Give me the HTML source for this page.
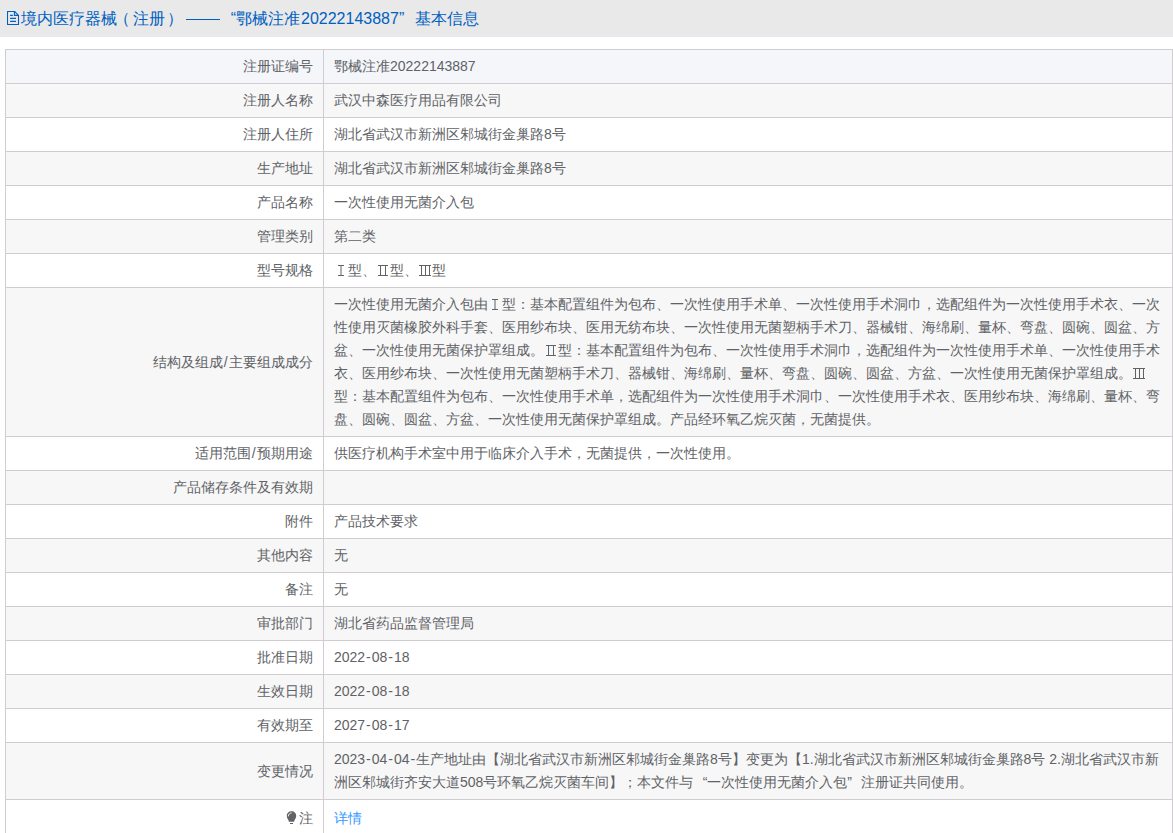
<!DOCTYPE html>
<html>
<head>
<meta charset="utf-8">
<style>
html,body{margin:0;padding:0;background:#fff;}
body{width:1173px;height:833px;overflow:hidden;position:relative;font-family:"Liberation Sans",sans-serif;}
.hd{position:absolute;left:0;top:0;width:1173px;height:36px;background:#e9e9e9;border-bottom:1px solid #e7eaf4;}
.t{position:absolute;top:1px;height:36px;line-height:36px;font-size:16px;color:#0060c0;white-space:nowrap;}
.ico{position:absolute;left:7px;top:11px;}
.dash{position:absolute;left:186px;top:19px;width:34px;height:1px;background:#0060c0;}
table{position:absolute;left:5px;top:49px;width:1168px;border-collapse:collapse;table-layout:fixed;}
td{border:1px solid #cfcdcf;padding:5px 10px;line-height:23px;font-size:14px;color:#606266;vertical-align:middle;white-space:nowrap;overflow:hidden;}
td.l{width:297px;text-align:right;}
tr.g td{background:#f7f7f7;}
tr.b td{background:#f4f6fa;}
.ln{display:block;white-space:nowrap;}
.rn{display:inline-block;vertical-align:top;}
.hy{display:inline-block;width:6.6px;text-align:center;}
.sl{display:inline-block;width:6.4px;text-align:center;}
.ql,.qr{display:inline-block;width:14px;}
.ql{text-align:right;}
.bulb{display:inline-block;vertical-align:top;margin-top:4px;margin-right:2px;}
tr.last td{padding-top:7px;padding-bottom:3px;}
a{color:#3399ff;text-decoration:none;}
</style>
</head>
<body>
<div class="hd">
  <svg class="ico" width="14" height="16" viewBox="0 0 14 16"><path d="M0.5 0.5H7.6L11.5 4.4V13.5H0.5Z" fill="none" stroke="#0060c0" stroke-width="1.1" stroke-linejoin="round"/><path d="M7.4 0.5V4.4H11.5" fill="none" stroke="#0060c0" stroke-width="1.1"/><path d="M3.1 4.4H5.9M3.1 7.4H9M3.1 10.4H9" stroke="#0060c0" stroke-width="1.1"/></svg>
  <span class="t" style="left:21px">境内医疗器械</span><span class="t" style="left:114px;width:16px;text-align:right">（</span><span class="t" style="left:133px">注册</span><span class="t" style="left:167px;width:16px;text-align:left">）</span><span class="dash"></span><span class="t" style="left:220px;width:16px;text-align:right">“</span><span class="t" style="left:236px">鄂械注准</span><span class="t" style="left:301px">20222143887</span><span class="t" style="left:399px;width:16px;text-align:left">”</span><span class="t" style="left:415px">基本信息</span>
</div>
<table>
<tr class="b"><td class="l">注册证编号</td><td>鄂械注准20222143887</td></tr>
<tr class="g"><td class="l">注册人名称</td><td>武汉中森医疗用品有限公司</td></tr>
<tr><td class="l">注册人住所</td><td>湖北省武汉市新洲区邾城街金巢路8号</td></tr>
<tr class="g"><td class="l">生产地址</td><td>湖北省武汉市新洲区邾城街金巢路8号</td></tr>
<tr><td class="l">产品名称</td><td>一次性使用无菌介入包</td></tr>
<tr class="g"><td class="l">管理类别</td><td>第二类</td></tr>
<tr><td class="l">型号规格</td><td><svg class="rn" width="14" height="23" viewBox="0 0 14 23"><path d="M4 6.5H10M7 6.5V16.5M4 16.5H10" stroke="#606266" stroke-width="1" fill="none"/></svg>型、<svg class="rn" width="14" height="23" viewBox="0 0 14 23"><path d="M2 6.5H12M4.5 6.5V16.5M9.5 6.5V16.5M2 16.5H12" stroke="#606266" stroke-width="1" fill="none"/></svg>型、<svg class="rn" width="14" height="23" viewBox="0 0 14 23"><path d="M1 6.5H13M3.5 6.5V16.5M7.5 6.5V16.5M11.5 6.5V16.5M1 16.5H13" stroke="#606266" stroke-width="1" fill="none"/></svg>型</td></tr>
<tr class="g"><td class="l">结构及组成<span class="sl">/</span>主要组成成分</td><td>
<span class="ln">一次性使用无菌介入包由<svg class="rn" width="14" height="23" viewBox="0 0 14 23"><path d="M4 6.5H10M7 6.5V16.5M4 16.5H10" stroke="#606266" stroke-width="1" fill="none"/></svg>型：基本配置组件为包布、一次性使用手术单、一次性使用手术洞巾，选配组件为一次性使用手术衣、一次</span>
<span class="ln">性使用灭菌橡胶外科手套、医用纱布块、医用无纺布块、一次性使用无菌塑柄手术刀、器械钳、海绵刷、量杯、弯盘、圆碗、圆盆、方</span>
<span class="ln">盆、一次性使用无菌保护罩组成。<svg class="rn" width="14" height="23" viewBox="0 0 14 23"><path d="M2 6.5H12M4.5 6.5V16.5M9.5 6.5V16.5M2 16.5H12" stroke="#606266" stroke-width="1" fill="none"/></svg>型：基本配置组件为包布、一次性使用手术洞巾，选配组件为一次性使用手术单、一次性使用手术</span>
<span class="ln">衣、医用纱布块、一次性使用无菌塑柄手术刀、器械钳、海绵刷、量杯、弯盘、圆碗、圆盆、方盆、一次性使用无菌保护罩组成。<svg class="rn" width="14" height="23" viewBox="0 0 14 23"><path d="M1 6.5H13M3.5 6.5V16.5M7.5 6.5V16.5M11.5 6.5V16.5M1 16.5H13" stroke="#606266" stroke-width="1" fill="none"/></svg></span>
<span class="ln">型：基本配置组件为包布、一次性使用手术单，选配组件为一次性使用手术洞巾、一次性使用手术衣、医用纱布块、海绵刷、量杯、弯</span>
<span class="ln">盘、圆碗、圆盆、方盆、一次性使用无菌保护罩组成。产品经环氧乙烷灭菌，无菌提供。</span>
</td></tr>
<tr><td class="l">适用范围<span class="sl">/</span>预期用途</td><td>供医疗机构手术室中用于临床介入手术，无菌提供，一次性使用。</td></tr>
<tr class="g"><td class="l">产品储存条件及有效期</td><td></td></tr>
<tr><td class="l">附件</td><td>产品技术要求</td></tr>
<tr class="g"><td class="l">其他内容</td><td>无</td></tr>
<tr><td class="l">备注</td><td>无</td></tr>
<tr class="g"><td class="l">审批部门</td><td>湖北省药品监督管理局</td></tr>
<tr><td class="l">批准日期</td><td>2022<span class="hy">-</span>08<span class="hy">-</span>18</td></tr>
<tr class="g"><td class="l">生效日期</td><td>2022<span class="hy">-</span>08<span class="hy">-</span>18</td></tr>
<tr><td class="l">有效期至</td><td>2027<span class="hy">-</span>08<span class="hy">-</span>17</td></tr>
<tr class="g"><td class="l">变更情况</td><td>
<span class="ln">2023<span class="hy">-</span>04<span class="hy">-</span>04<span class="hy">-</span>生产地址由【湖北省武汉市新洲区邾城街金巢路8号】变更为【1.湖北省武汉市新洲区邾城街金巢路8号 2.湖北省武汉市新</span>
<span class="ln">洲区邾城街齐安大道508号环氧乙烷灭菌车间】；本文件与<span class="ql">“</span>一次性使用无菌介入包<span class="qr">”</span>注册证共同使用。</span>
</td></tr>
<tr class="last"><td class="l"><svg class="bulb" width="11" height="14" viewBox="0 0 11 14"><path d="M5.5 0.3C8.3 0.3 10.2 2.4 10.2 5C10.2 7 9 8.2 8.4 9.4L8.1 10.7H2.9L2.6 9.4C2 8.2 0.8 7 0.8 5C0.8 2.4 2.7 0.3 5.5 0.3Z" fill="#606266"/><path d="M2.3 5.4C2.3 3.4 3.7 2 5.7 1.9" stroke="#fff" stroke-width="1" fill="none" opacity="0.9"/><rect x="4" y="12" width="3" height="1" fill="#606266"/></svg>注</td><td><a>详情</a></td></tr>
</table>
</body>
</html>
